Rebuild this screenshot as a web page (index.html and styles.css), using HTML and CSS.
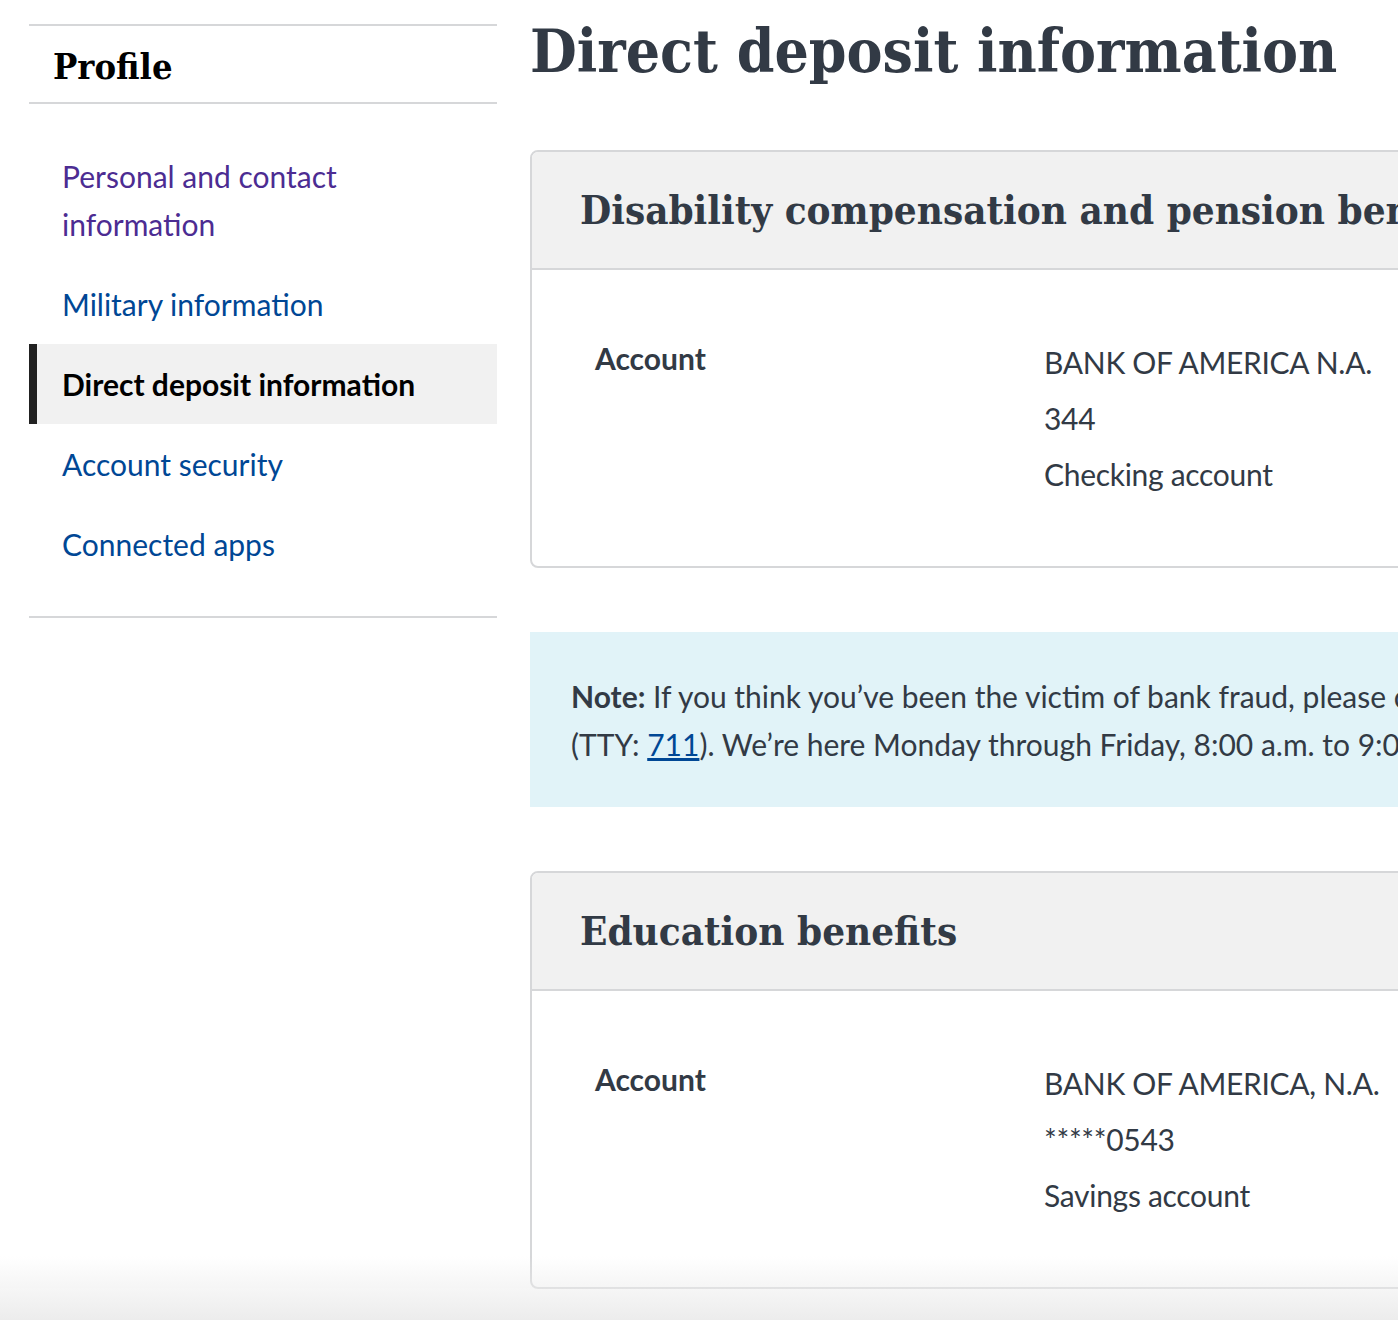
FILE: index.html
```html
<!DOCTYPE html>
<html lang="en">
<head>
<meta charset="utf-8">
<title>Direct deposit information</title>
<link rel="stylesheet" href="styles.css">
</head>
<body>
<div class="page">
  <nav class="sidenav">
    <h2 class="sidenav-title">Profile</h2>
    <ul class="sidenav-list">
      <li><a class="nav-link visited" href="#">Personal and contact information</a></li>
      <li><a class="nav-link" href="#">Military information</a></li>
      <li><a class="nav-link active" href="#">Direct deposit information</a></li>
      <li><a class="nav-link" href="#">Account security</a></li>
      <li><a class="nav-link" href="#">Connected apps</a></li>
    </ul>
  </nav>
  <main class="content">
    <h1 class="page-title">Direct deposit information</h1>

    <section class="card">
      <h2 class="card-title">Disability compensation and pension benefits</h2>
      <div class="card-body">
        <div class="field-label">Account</div>
        <div class="field-value">
          <p>BANK OF AMERICA N.A.</p>
          <p>344</p>
          <p>Checking account</p>
        </div>
      </div>
    </section>

    <div class="note">
      <p><strong>Note:</strong> If you think you’ve been the victim of bank fraud, please call us at 800-827-1000<br>(TTY: <a href="#">711</a>). We’re here Monday through Friday, 8:00 a.m. to 9:00 p.m. ET.</p>
    </div>

    <section class="card">
      <h2 class="card-title">Education benefits</h2>
      <div class="card-body">
        <div class="field-label">Account</div>
        <div class="field-value">
          <p>BANK OF AMERICA, N.A.</p>
          <p>*****0543</p>
          <p>Savings account</p>
        </div>
      </div>
    </section>
  </main>
</div>
<div class="bottom-fade"></div>
</body>
</html>
```

FILE: styles.css
```css
html, body {
  margin: 0;
  padding: 0;
  overflow: hidden;
  background: #fff;
}
body {
  font-family: "Lato", "Liberation Sans", sans-serif;
  font-size: 30px;
  line-height: 1.5;
  color: #323a45;
}
.page {
  display: flex;
  align-items: flex-start;
  gap: 33px;
  padding: 24px 0 0 29px;
  width: 1900px;
}
.sidenav {
  width: 468px;
  flex: none;
  border-top: 2px solid #d6d7d9;
  border-bottom: 2px solid #d6d7d9;
}
.sidenav-title {
  margin: 0;
  padding: 18px 24px 14px;
  font-family: "DejaVu Serif", serif;
  font-stretch: condensed;
  font-weight: 700;
  font-size: 36px;
  line-height: 44px;
  color: #000;
  border-bottom: 2px solid #d6d7d9;
}
.sidenav-list {
  list-style: none;
  margin: 32px 0 32px;
  padding: 0;
}
.nav-link {
  display: block;
  padding: 16px 24px 16px 25px;
  border-left: 8px solid transparent;
  color: #004795;
  text-decoration: none;
  line-height: 48px;
}
.nav-link.visited {
  color: #4c2c92;
  padding-right: 140px;
}
.nav-link.active {
  background: #f1f1f1;
  border-left-color: #212121;
  color: #000;
  font-weight: 700;
}
.content {
  width: 1300px;
  flex: none;
}
.page-title {
  margin: -21px 0 51px;
  font-family: "DejaVu Serif", serif;
  font-stretch: condensed;
  font-weight: 700;
  font-size: 60px;
  line-height: 96px;
  color: #323a45;
  white-space: nowrap;
}
.card {
  border: 2px solid #d6d7d9;
  border-radius: 8px;
  overflow: hidden;
}
.card-title {
  margin: 0;
  padding: 0 48px;
  height: 116px;
  display: flex;
  align-items: center;
  background: #f1f1f1;
  border-bottom: 2px solid #d6d7d9;
  font-family: "DejaVu Serif", serif;
  font-stretch: condensed;
  font-weight: 700;
  font-size: 40px;
  color: #323a45;
  white-space: nowrap;
}
.card-body {
  display: grid;
  grid-template-columns: 449px 1fr;
  padding: 64px 0 64px 63px;
}
.field-label {
  font-weight: 700;
  line-height: 48px;
}
.field-value p {
  margin: 0;
  line-height: 56px;
  letter-spacing: -0.3px;
}
.note {
  margin: 64px 0 64px;
  background: #e1f3f8;
  padding: 40px 40px 39px 41px;
}
.note p {
  margin: 0;
  line-height: 48px;
  white-space: nowrap;
}
.note a {
  color: #004795;
}
.bottom-fade {
  position: fixed;
  left: 0;
  right: 0;
  bottom: 0;
  height: 64px;
  background: linear-gradient(to bottom, rgba(238,238,238,0), #ececec);
  pointer-events: none;
}
```
